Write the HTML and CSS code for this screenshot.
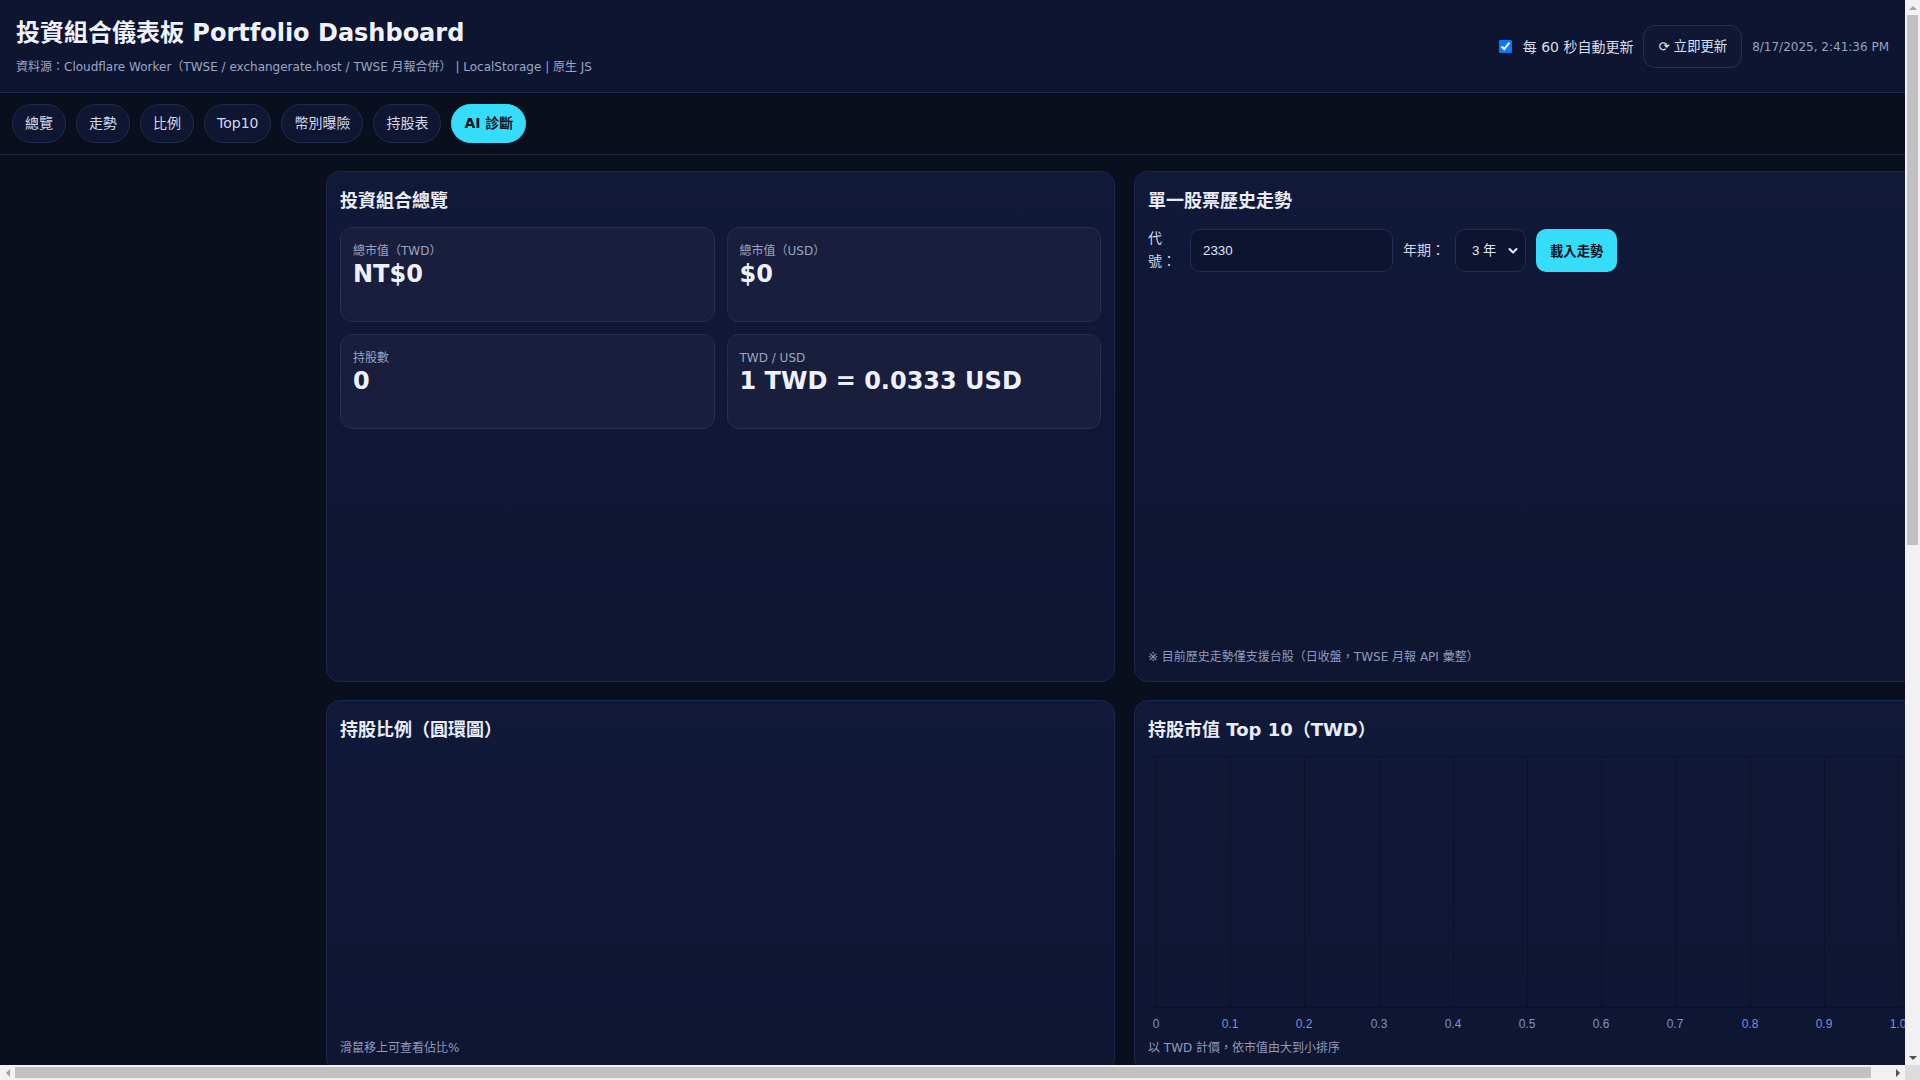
FILE: index.html
```html
<!DOCTYPE html>
<html lang="zh-Hant">
<head>
<meta charset="utf-8">
<title>投資組合儀表板 Portfolio Dashboard</title>
<link rel="stylesheet" href="styles.css">
</head>
<body>
<div class="app">
<header class="topbar">
  <div class="brand">
    <h1 class="title">投資組合儀表板 Portfolio Dashboard</h1>
    <div class="subtitle">資料源：Cloudflare Worker（TWSE / exchangerate.host / TWSE 月報合併） | LocalStorage | 原生 JS</div>
  </div>
  <div class="actions">
    <label class="auto"><input type="checkbox" checked><span>每 60 秒自動更新</span></label>
    <button class="btn-ghost" type="button">⟳ 立即更新</button>
    <span class="stamp">8/17/2025, 2:41:36 PM</span>
  </div>
</header>
<nav class="tabs">
  <button class="tab" type="button">總覽</button>
  <button class="tab" type="button">走勢</button>
  <button class="tab" type="button">比例</button>
  <button class="tab" type="button">Top10</button>
  <button class="tab" type="button">幣別曝險</button>
  <button class="tab" type="button">持股表</button>
  <button class="tab active" type="button">AI 診斷</button>
</nav>
<div class="page">
  <aside class="sidebar"></aside>
  <main class="grid">
    <section class="card">
      <h2 class="card-title">投資組合總覽</h2>
      <div class="stats">
        <div class="stat"><div class="stat-label">總市值（TWD）</div><div class="stat-value">NT$0</div></div>
        <div class="stat"><div class="stat-label">總市值（USD）</div><div class="stat-value">$0</div></div>
        <div class="stat"><div class="stat-label">持股數</div><div class="stat-value">0</div></div>
        <div class="stat"><div class="stat-label">TWD / USD</div><div class="stat-value">1 TWD = 0.0333 USD</div></div>
      </div>
    </section>
    <section class="card">
      <h2 class="card-title">單一股票歷史走勢</h2>
      <div class="controls">
        <label class="ctl-label code" for="sym">代號：</label>
        <input id="sym" class="field" type="text" value="2330">
        <label class="ctl-label" for="yrs">年期：</label>
        <div class="select-wrap">
          <select id="yrs" class="select">
            <option>1 年</option>
            <option selected>3 年</option>
            <option>5 年</option>
          </select>
          <svg class="chev" width="10" height="8" viewBox="0 0 10 8"><path d="M1.5 2 L5 5.5 L8.5 2" fill="none" stroke="#e8ecf8" stroke-width="2" stroke-linecap="round" stroke-linejoin="round"/></svg>
        </div>
        <button class="btn-primary" type="button">載入走勢</button>
      </div>
      <div class="chart-hist"></div>
      <p class="note">※ 目前歷史走勢僅支援台股（日收盤，TWSE 月報 API 彙整）</p>
    </section>
    <section class="card">
      <h2 class="card-title">持股比例（圓環圖）</h2>
      <div class="chart"></div>
      <p class="note">滑鼠移上可查看佔比%</p>
    </section>
    <section class="card">
      <h2 class="card-title">持股市值 Top 10（TWD）</h2>
      <div class="chart">
        <svg class="bars" width="761" height="279" viewBox="0 0 761 279">
          <g stroke="#0b1128" stroke-width="1">
            <line x1="0" y1="0.5" x2="761" y2="0.5"/>
            <line x1="0" y1="251.5" x2="761" y2="251.5"/>
            <line x1="8.5" y1="0" x2="8.5" y2="252"/>
            <line x1="82.5" y1="0" x2="82.5" y2="252"/>
            <line x1="156.5" y1="0" x2="156.5" y2="252"/>
            <line x1="231.5" y1="0" x2="231.5" y2="252"/>
            <line x1="305.5" y1="0" x2="305.5" y2="252"/>
            <line x1="379.5" y1="0" x2="379.5" y2="252"/>
            <line x1="453.5" y1="0" x2="453.5" y2="252"/>
            <line x1="527.5" y1="0" x2="527.5" y2="252"/>
            <line x1="602.5" y1="0" x2="602.5" y2="252"/>
            <line x1="676.5" y1="0" x2="676.5" y2="252"/>
            <line x1="750.5" y1="0" x2="750.5" y2="252"/>
          </g>
          <g class="ticks" text-anchor="middle">
            <text x="8" y="272">0</text>
            <text x="82" y="272">0.1</text>
            <text x="156" y="272">0.2</text>
            <text x="231" y="272">0.3</text>
            <text x="305" y="272">0.4</text>
            <text x="379" y="272">0.5</text>
            <text x="453" y="272">0.6</text>
            <text x="527" y="272">0.7</text>
            <text x="602" y="272">0.8</text>
            <text x="676" y="272">0.9</text>
            <text x="750" y="272">1.0</text>
          </g>
        </svg>
      </div>
      <p class="note">以 TWD 計價，依市值由大到小排序</p>
    </section>
    <section class="card">
      <h2 class="card-title">幣別曝險（TWD / USD）</h2>
      <div class="chart tall"></div>
      <p class="note">依目前匯率換算為 TWD</p>
    </section>
    <section class="card">
      <h2 class="card-title">AI 診斷</h2>
      <div class="chart tall"></div>
      <p class="note">僅供參考，非投資建議</p>
    </section>
    <section class="card wide">
      <h2 class="card-title">持股表</h2>
      <div class="table-wrap">
        <table class="holdings">
          <thead><tr><th>代號</th><th>名稱</th><th>股數</th><th>現價</th><th>市值（TWD）</th><th>佔比</th></tr></thead>
          <tbody><tr><td colspan="6" class="empty">尚無持股資料</td></tr></tbody>
        </table>
      </div>
      <p class="note">資料儲存在瀏覽器 LocalStorage</p>
    </section>
  </main>
</div>
</div>

<div class="sb sb-v" aria-hidden="true">
  <span class="sb-btn"><i class="tri tri-up"></i></span>
  <span class="sb-track"><span class="sb-thumb sb-thumb-v"></span></span>
  <span class="sb-btn"><i class="tri tri-down"></i></span>
</div>
<div class="sb sb-h" aria-hidden="true">
  <span class="sb-btn"><i class="tri tri-left"></i></span>
  <span class="sb-track"><span class="sb-thumb sb-thumb-h"></span></span>
  <span class="sb-btn"><i class="tri tri-right"></i></span>
</div>
<div class="sb-corner" aria-hidden="true"></div>
</body>
</html>
```
FILE: styles.css
```css
* { box-sizing: border-box; }
html, body { margin: 0; height: 100%; overflow: hidden; }
body {
  background: #0a0f1e;
  color: #e6ebf8;
  font-family: "DejaVu Sans", "Noto Sans CJK TC", sans-serif;
  font-size: 14px;
}

/* visible area (leaves room for the scrollbars) */
.app { margin-right: 15px; }

/* classic scrollbars drawn over the page edge */
.sb {
  position: fixed;
  display: flex;
  background: #f1f1f1;
  z-index: 10;
}
.sb-v { top: 0; right: 0; width: 15px; bottom: 15px; flex-direction: column; }
.sb-h { left: 0; bottom: 0; height: 15px; right: 15px; flex-direction: row; }
.sb-btn {
  flex: 0 0 15px;
  width: 15px;
  height: 15px;
  display: flex;
  align-items: center;
  justify-content: center;
}
.sb-track { flex: 1; position: relative; }
.sb-thumb { position: absolute; background: #c1c1c1; }
.sb-thumb-v { left: 2px; right: 2px; top: 0; height: 530px; }
.sb-thumb-h { top: 2px; bottom: 2px; left: 0; right: 19px; }
.sb-corner {
  position: fixed;
  right: 0;
  bottom: 0;
  width: 15px;
  height: 15px;
  background: #dcdcdc;
  z-index: 10;
}
.tri { display: block; width: 0; height: 0; }
.tri-up { border-left: 4px solid transparent; border-right: 4px solid transparent; border-bottom: 4px solid #a3a3a3; }
.tri-down { border-left: 4px solid transparent; border-right: 4px solid transparent; border-top: 4px solid #505050; }
.tri-left { border-top: 4px solid transparent; border-bottom: 4px solid transparent; border-right: 4px solid #a3a3a3; }
.tri-right { border-top: 4px solid transparent; border-bottom: 4px solid transparent; border-left: 4px solid #505050; }

/* header */
.topbar {
  display: flex;
  justify-content: space-between;
  align-items: center;
  padding: 17px 16px 16px;
  background: #0e1530;
  border-bottom: 1px solid #1e2a4c;
}
.title {
  margin: 0;
  font-size: 24px;
  line-height: 32px;
  font-weight: 700;
  color: #eef2fc;
}
.subtitle {
  margin-top: 9px;
  font-size: 12px;
  line-height: 18px;
  color: #9aa6c6;
}
.actions { display: flex; align-items: center; gap: 10px; }
.auto { display: flex; align-items: center; gap: 11px; color: #d6ddef; line-height: 18px; }
.auto input { margin: 0; width: 13px; height: 13px; accent-color: #0b76ff; }
.btn-ghost {
  font-family: "DejaVu Sans", "Noto Sans CJK TC", sans-serif;
  font-size: 13.33px;
  line-height: 17px;
  color: #dbe2f3;
  background: #0f1733;
  border: 1px solid #24305a;
  border-radius: 12px;
  padding: 12px 14px;
}
.stamp { font-size: 12px; color: #98a3c3; }

/* tabs */
.tabs {
  display: flex;
  gap: 10px;
  padding: 11px 12px;
  border-bottom: 1px solid #1b2546;
}
.tab {
  font-family: inherit;
  font-size: 14px;
  line-height: 17px;
  padding: 10px 12px;
  border: 1px solid #222c4e;
  border-radius: 999px;
  background: #0f1631;
  color: #d3d9ec;
}
.tab.active {
  background: #36ddfb;
  border-color: #36ddfb;
  color: #0a0f1e;
  font-weight: 700;
}

/* layout */
.page {
  display: flex;
  gap: 12px;
  padding: 16px 0 24px;
}
.sidebar { flex: 0 0 314px; }
.grid {
  flex: none;
  display: grid;
  grid-template-columns: 789px 789px;
  column-gap: 19px;
  row-gap: 18px;
}
.card {
  display: flex;
  flex-direction: column;
  padding: 14px 13px 15px;
  border: 1px solid #1c2750;
  border-radius: 14px;
  background: linear-gradient(180deg, #111938 0%, #0f1632 100%);
}
.card.wide { grid-column: 1 / span 2; }
.card-title {
  margin: 0 0 11px;
  font-size: 18px;
  line-height: 30px;
  font-weight: 700;
  color: #e8ecf8;
}

/* stats */
.stats {
  display: grid;
  grid-template-columns: 1fr 1fr;
  gap: 12px;
}
.stat {
  height: 95px;
  padding: 14px 12px 12px;
  border: 1px solid #262f55;
  border-radius: 12px;
  background: #181e3b;
}
.stat-label { font-size: 12px; line-height: 18px; color: #9aa5c4; }
.stat-value { font-size: 24px; line-height: 29px; font-weight: 700; color: #eef1fb; }

/* controls */
.controls { display: flex; align-items: center; gap: 10px; }
.ctl-label { color: #cfd6ea; font-size: 14px; line-height: 23px; }
.ctl-label.code { width: 32px; }
.field {
  width: 203px;
  height: 43px;
  padding: 0 12px;
  font-family: "Liberation Sans", "Noto Sans CJK TC", sans-serif;
  font-size: 13.33px;
  color: #dfe5f5;
  background: #0d1430;
  border: 1px solid #222d55;
  border-radius: 10px;
  outline: none;
}
.select-wrap { position: relative; }
.select {
  appearance: none;
  -webkit-appearance: none;
  width: 71px;
  height: 43px;
  padding: 0 0 0 16px;
  font-family: "Liberation Sans", "Noto Sans CJK TC", sans-serif;
  font-size: 13.33px;
  color: #dfe5f5;
  background: #0d1430;
  border: 1px solid #222d55;
  border-radius: 10px;
}
.chev { position: absolute; right: 8px; top: 18px; pointer-events: none; }
.btn-primary {
  height: 43px;
  padding: 0 14px;
  font-family: "DejaVu Sans", "Noto Sans CJK TC", sans-serif;
  font-size: 13.33px;
  font-weight: 700;
  color: #0a1020;
  background: #36ddfb;
  border: none;
  border-radius: 10px;
}

/* charts */
.chart-hist { height: 361px; margin-top: 10px; }
.chart { height: 279px; }
.chart.tall { height: 400px; }
.bars { display: block; }
.ticks text {
  font-family: "Liberation Sans", Arial, sans-serif;
  font-size: 12px;
  fill: #7f8edf;
}
.note {
  margin: 4px 0 0;
  font-size: 12px;
  line-height: 18px;
  color: #8f9abc;
}

/* table */
.table-wrap { height: 360px; }
.holdings { width: 100%; border-collapse: collapse; font-size: 13px; }
.holdings th {
  text-align: left;
  padding: 10px 12px;
  color: #9aa5c4;
  font-weight: 600;
  border-bottom: 1px solid #222d55;
}
.holdings td { padding: 14px 12px; color: #cfd6ea; }
.holdings .empty { text-align: center; color: #8f9abc; }
```
